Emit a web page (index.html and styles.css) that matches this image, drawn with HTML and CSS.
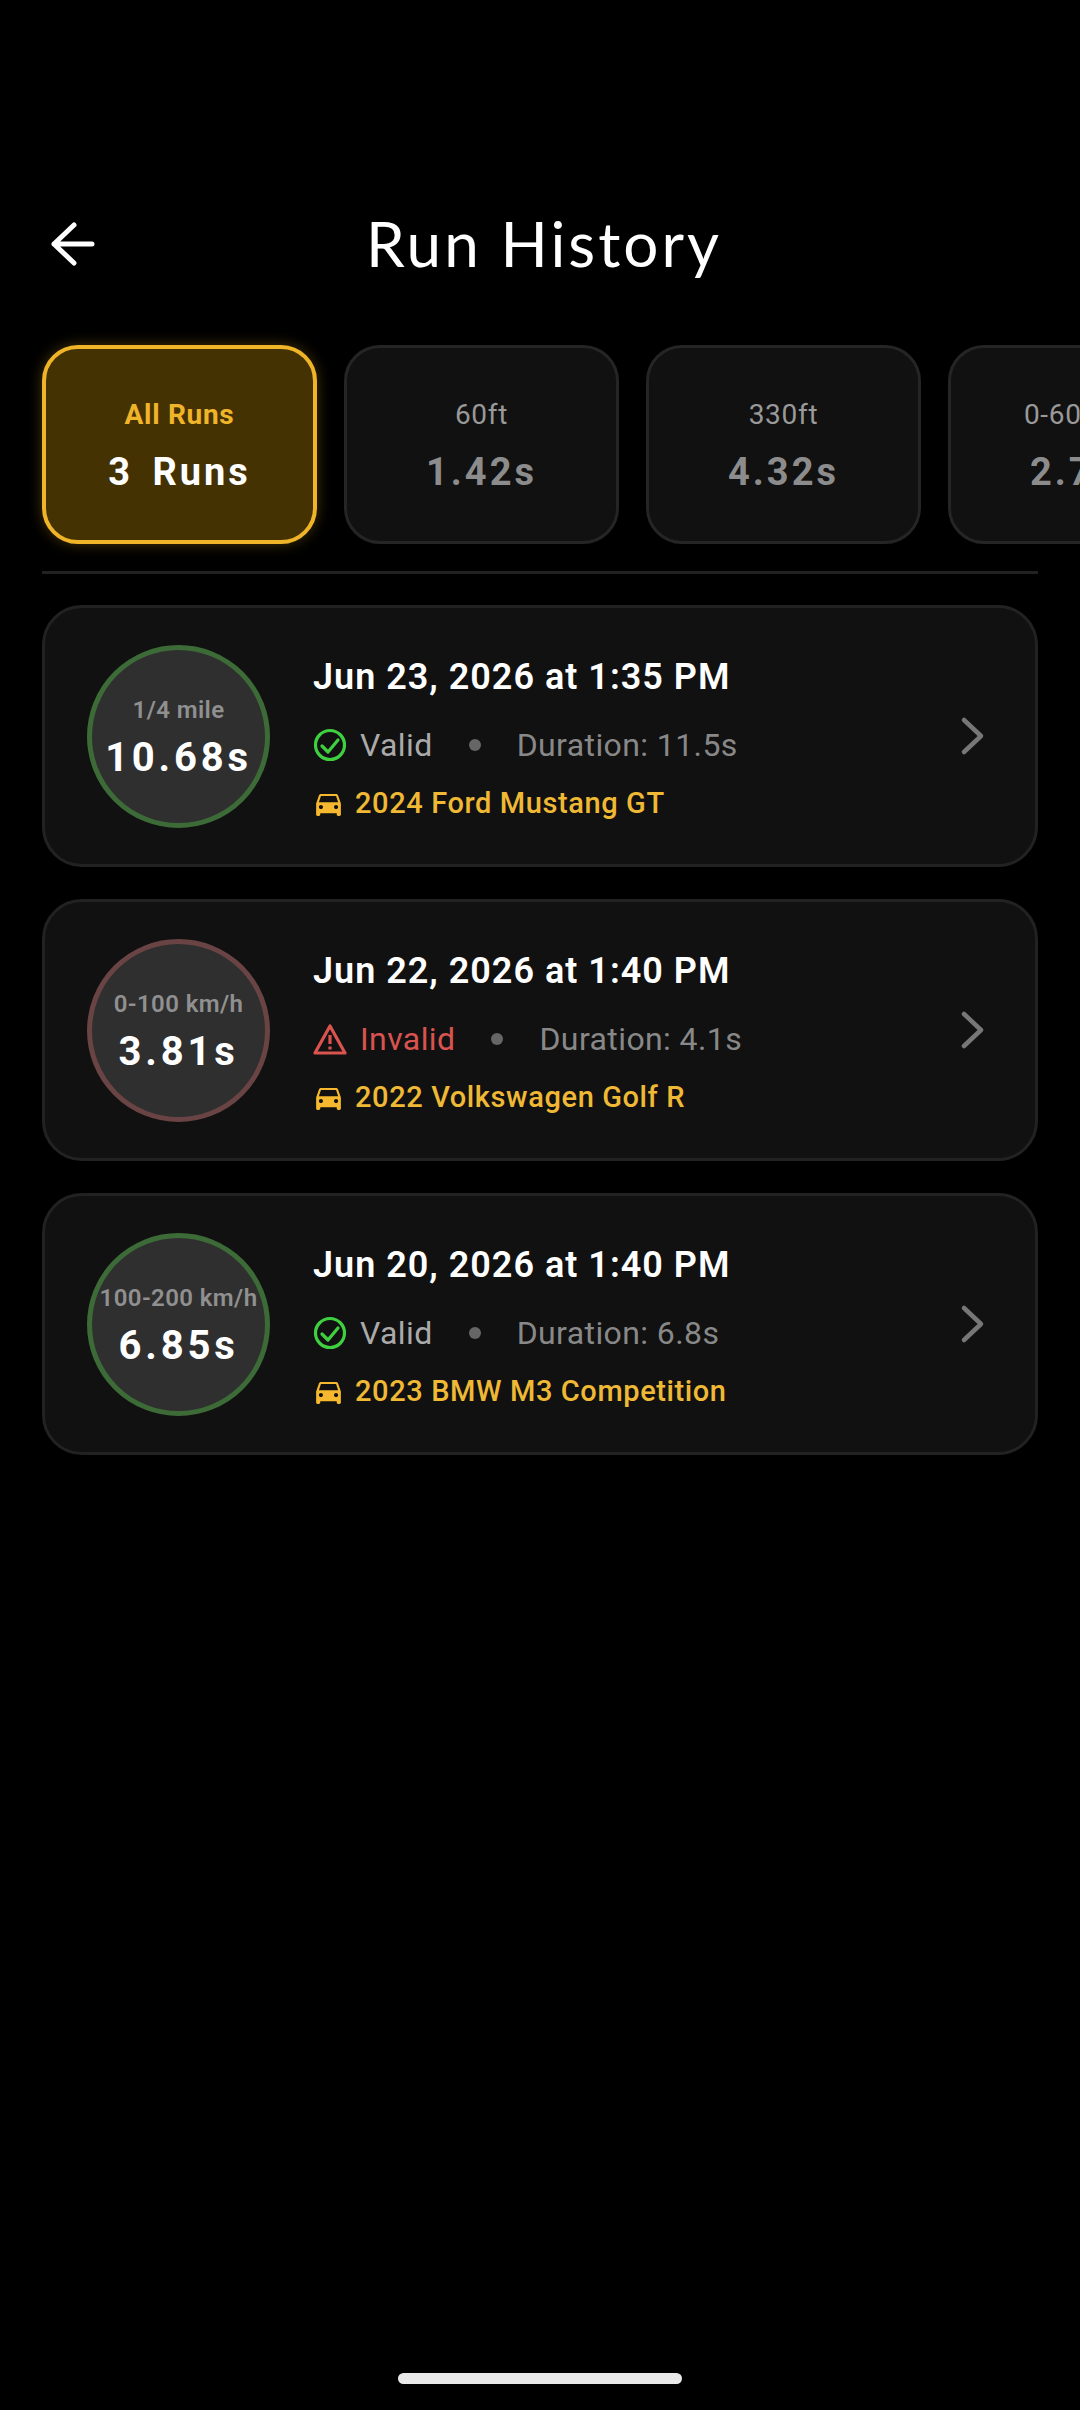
FILE: index.html
```html
<!DOCTYPE html>
<html lang="en">
<head>
  <meta charset="UTF-8" />
  <meta name="viewport" content="width=device-width, initial-scale=1.0"/>
  <title>Run History</title>
  <link rel="stylesheet" href="styles.css">
</head>
<body>

  <div class="page">
    <header class="header">
      <button class="back-btn" aria-label="Back">
        <svg width="50" height="50" viewBox="0 0 50 50" fill="none" stroke="#fff" stroke-width="5" stroke-linecap="round" stroke-linejoin="round">
          <path d="M5 25H43M25 6L5 25L25 44"/>
        </svg>
      </button>
      <h1 class="title">Run History</h1>
    </header>

    <div class="chips">
      <div class="chip chip-active">
        <div class="chip-label">All Runs</div>
        <div class="chip-value">3 Runs</div>
      </div>
      <div class="chip">
        <div class="chip-label">60ft</div>
        <div class="chip-value">1.42s</div>
      </div>
      <div class="chip">
        <div class="chip-label">330ft</div>
        <div class="chip-value">4.32s</div>
      </div>
      <div class="chip">
        <div class="chip-label">0-60 mph</div>
        <div class="chip-value">2.78s</div>
      </div>
    </div>

    <div class="divider"></div>

    <main class="runs">
      <div class="run-card">
        <div class="badge badge-valid">
          <div class="badge-label">1/4 mile</div>
          <div class="badge-value">10.68s</div>
        </div>
        <div class="run-info">
          <div class="run-date">Jun 23, 2026 at 1:35 PM</div>
          <div class="run-status">
            <svg class="status-icon" width="34" height="34" viewBox="0 0 34 34" fill="none" stroke="#3fd03f" stroke-width="3.2" stroke-linecap="round" stroke-linejoin="round">
              <circle cx="17" cy="17" r="14.5"/>
              <path d="M9 18L15 24L25 12"/>
            </svg>
            <span class="status-text">Valid</span>
            <span class="status-dot"></span>
            <span class="duration">Duration: 11.5s</span>
          </div>
          <div class="run-car">
            <svg class="car-icon" width="33" height="33" viewBox="0 0 24 24" fill="#f5b82e">
              <path d="M18.92 6.01C18.72 5.42 18.16 5 17.5 5h-11c-.66 0-1.21.42-1.42 1.01L3 12v8c0 .55.45 1 1 1h1c.55 0 1-.45 1-1v-1h12v1c0 .55.45 1 1 1h1c.55 0 1-.45 1-1v-8l-2.08-5.99zM6.5 16c-.83 0-1.5-.67-1.5-1.5S5.67 13 6.5 13s1.5.67 1.5 1.5S7.33 16 6.5 16zm11 0c-.83 0-1.5-.67-1.5-1.5s.67-1.5 1.5-1.5 1.5.67 1.5 1.5-.67 1.5-1.5 1.5zM5 11l1.5-4.5h11L19 11H5z"/>
            </svg>
            <span>2024 Ford Mustang GT</span>
          </div>
        </div>
        <svg class="chevron" width="40" height="50" viewBox="0 0 40 50" fill="none" stroke="#777" stroke-width="4.5" stroke-linecap="round" stroke-linejoin="round">
          <path d="M11 9L28 25L11 41"/>
        </svg>
      </div>

      <div class="run-card">
        <div class="badge badge-invalid">
          <div class="badge-label">0-100 km/h</div>
          <div class="badge-value">3.81s</div>
        </div>
        <div class="run-info">
          <div class="run-date">Jun 22, 2026 at 1:40 PM</div>
          <div class="run-status">
            <svg class="status-icon" width="34" height="34" viewBox="0 0 34 34" fill="none" stroke="#d9534f" stroke-width="3.2" stroke-linejoin="round">
              <path d="M17 4L32 31H2Z"/>
              <path d="M17 13V22M17 24.5V27.5"/>
            </svg>
            <span class="status-text status-bad">Invalid</span>
            <span class="status-dot"></span>
            <span class="duration">Duration: 4.1s</span>
          </div>
          <div class="run-car">
            <svg class="car-icon" width="33" height="33" viewBox="0 0 24 24" fill="#f5b82e">
              <path d="M18.92 6.01C18.72 5.42 18.16 5 17.5 5h-11c-.66 0-1.21.42-1.42 1.01L3 12v8c0 .55.45 1 1 1h1c.55 0 1-.45 1-1v-1h12v1c0 .55.45 1 1 1h1c.55 0 1-.45 1-1v-8l-2.08-5.99zM6.5 16c-.83 0-1.5-.67-1.5-1.5S5.67 13 6.5 13s1.5.67 1.5 1.5S7.33 16 6.5 16zm11 0c-.83 0-1.5-.67-1.5-1.5s.67-1.5 1.5-1.5 1.5.67 1.5 1.5-.67 1.5-1.5 1.5zM5 11l1.5-4.5h11L19 11H5z"/>
            </svg>
            <span>2022 Volkswagen Golf R</span>
          </div>
        </div>
        <svg class="chevron" width="40" height="50" viewBox="0 0 40 50" fill="none" stroke="#777" stroke-width="4.5" stroke-linecap="round" stroke-linejoin="round">
          <path d="M11 9L28 25L11 41"/>
        </svg>
      </div>

      <div class="run-card">
        <div class="badge badge-valid">
          <div class="badge-label">100-200 km/h</div>
          <div class="badge-value">6.85s</div>
        </div>
        <div class="run-info">
          <div class="run-date">Jun 20, 2026 at 1:40 PM</div>
          <div class="run-status">
            <svg class="status-icon" width="34" height="34" viewBox="0 0 34 34" fill="none" stroke="#3fd03f" stroke-width="3.2" stroke-linecap="round" stroke-linejoin="round">
              <circle cx="17" cy="17" r="14.5"/>
              <path d="M9 18L15 24L25 12"/>
            </svg>
            <span class="status-text">Valid</span>
            <span class="status-dot"></span>
            <span class="duration">Duration: 6.8s</span>
          </div>
          <div class="run-car">
            <svg class="car-icon" width="33" height="33" viewBox="0 0 24 24" fill="#f5b82e">
              <path d="M18.92 6.01C18.72 5.42 18.16 5 17.5 5h-11c-.66 0-1.21.42-1.42 1.01L3 12v8c0 .55.45 1 1 1h1c.55 0 1-.45 1-1v-1h12v1c0 .55.45 1 1 1h1c.55 0 1-.45 1-1v-8l-2.08-5.99zM6.5 16c-.83 0-1.5-.67-1.5-1.5S5.67 13 6.5 13s1.5.67 1.5 1.5S7.33 16 6.5 16zm11 0c-.83 0-1.5-.67-1.5-1.5s.67-1.5 1.5-1.5 1.5.67 1.5 1.5-.67 1.5-1.5 1.5zM5 11l1.5-4.5h11L19 11H5z"/>
            </svg>
            <span>2023 BMW M3 Competition</span>
          </div>
        </div>
        <svg class="chevron" width="40" height="50" viewBox="0 0 40 50" fill="none" stroke="#777" stroke-width="4.5" stroke-linecap="round" stroke-linejoin="round">
          <path d="M11 9L28 25L11 41"/>
        </svg>
      </div>
    </main>

    <div class="home-bar"></div>
  </div>

</body>
</html>
```

FILE: styles.css
```css
html, body {
  margin: 0;
  padding: 0;
  background: #000;
  font-family: Roboto, Arial, sans-serif;
  color: white;
  overflow: hidden;
}

.page {
  width: 1080px;
  height: 2410px;
  display: flex;
  flex-direction: column;
  padding-top: 184px;
  box-sizing: border-box;
  overflow: hidden;
}

.header {
  display: flex;
  align-items: center;
  height: 120px;
  padding-left: 49px;
}

.back-btn {
  width: 50px;
  height: 50px;
  padding: 0;
  background: none;
  border: none;
  flex: none;
}

.back-btn svg {
  display: block;
}

.title {
  margin: 0 0 3px 267px;
  font-family: Lato, sans-serif;
  font-size: 62px;
  font-weight: 400;
  letter-spacing: 3px;
  white-space: nowrap;
}

.chips {
  display: flex;
  gap: 27px;
  margin-top: 41px;
  padding-left: 42px;
}

.chip {
  flex: none;
  width: 275px;
  height: 199px;
  box-sizing: border-box;
  display: flex;
  flex-direction: column;
  align-items: center;
  justify-content: center;
  gap: 19px;
  padding-top: 2px;
  background: #111;
  border: 3px solid #252525;
  border-radius: 36px;
}

.chip-label {
  font-size: 28px;
  line-height: 34px;
  letter-spacing: 0.7px;
  color: #999;
  white-space: nowrap;
}

.chip-value {
  font-size: 38px;
  line-height: 42px;
  font-weight: 700;
  letter-spacing: 3px;
  word-spacing: 7px;
  color: #8c8c8c;
  white-space: nowrap;
}

.chip-active {
  background: #443203;
  border: 4px solid #f0b429;
  box-shadow: 0 0 14px rgba(240, 180, 41, 0.3);
}

.chip-active .chip-label {
  color: #f0b429;
  font-weight: 700;
}

.chip-active .chip-value {
  color: #fff;
}

.divider {
  height: 3px;
  margin: 27px 42px 0;
  background: #222;
}

.runs {
  display: flex;
  flex-direction: column;
  gap: 32px;
  margin: 31px 42px 0;
  flex: 1;
}

.run-card {
  height: 262px;
  box-sizing: border-box;
  display: flex;
  align-items: center;
  padding-left: 42px;
  background: #111;
  border: 3px solid #222;
  border-radius: 40px;
}

.badge {
  flex: none;
  width: 183px;
  height: 183px;
  box-sizing: border-box;
  display: flex;
  flex-direction: column;
  align-items: center;
  justify-content: center;
  gap: 12px;
  padding-top: 4px;
  background: #2f2f2f;
  border-radius: 50%;
  border: 5px solid #3d6b38;
}

.badge-invalid {
  border-color: #6a4444;
}

.badge-label {
  font-size: 24px;
  line-height: 28px;
  font-weight: 600;
  letter-spacing: 0.4px;
  color: #909090;
  white-space: nowrap;
}

.badge-value {
  font-size: 40px;
  line-height: 44px;
  font-weight: 700;
  letter-spacing: 3.8px;
  color: #fff;
}

.run-info {
  flex: 1;
  margin-left: 43px;
  display: flex;
  flex-direction: column;
  padding-top: 4px;
}

.run-date {
  font-size: 36px;
  line-height: 44px;
  font-weight: 600;
  letter-spacing: 1px;
  white-space: nowrap;
}

.run-status {
  display: flex;
  align-items: center;
  margin-top: 26px;
  font-size: 32px;
  line-height: 40px;
  letter-spacing: 0.4px;
  white-space: nowrap;
}

.status-icon {
  flex: none;
  margin-right: 13px;
}

.status-text {
  color: #aaa;
}

.status-bad {
  color: #d9534f;
}

.status-dot {
  width: 12px;
  height: 12px;
  margin: 0 36px;
  border-radius: 50%;
  background: #666;
}

.duration {
  color: #888;
}

.run-car {
  display: flex;
  align-items: center;
  margin-top: 20px;
  font-size: 29px;
  line-height: 36px;
  font-weight: 500;
  letter-spacing: 0.6px;
  color: #efb935;
  white-space: nowrap;
}

.car-icon {
  flex: none;
  margin-right: 10px;
  margin-left: -1px;
}

.chevron {
  flex: none;
  margin-right: 42px;
}

.home-bar {
  flex: none;
  width: 284px;
  height: 11px;
  margin: 0 auto 26px;
  border-radius: 6px;
  background: #e9e9e9;
}
```
